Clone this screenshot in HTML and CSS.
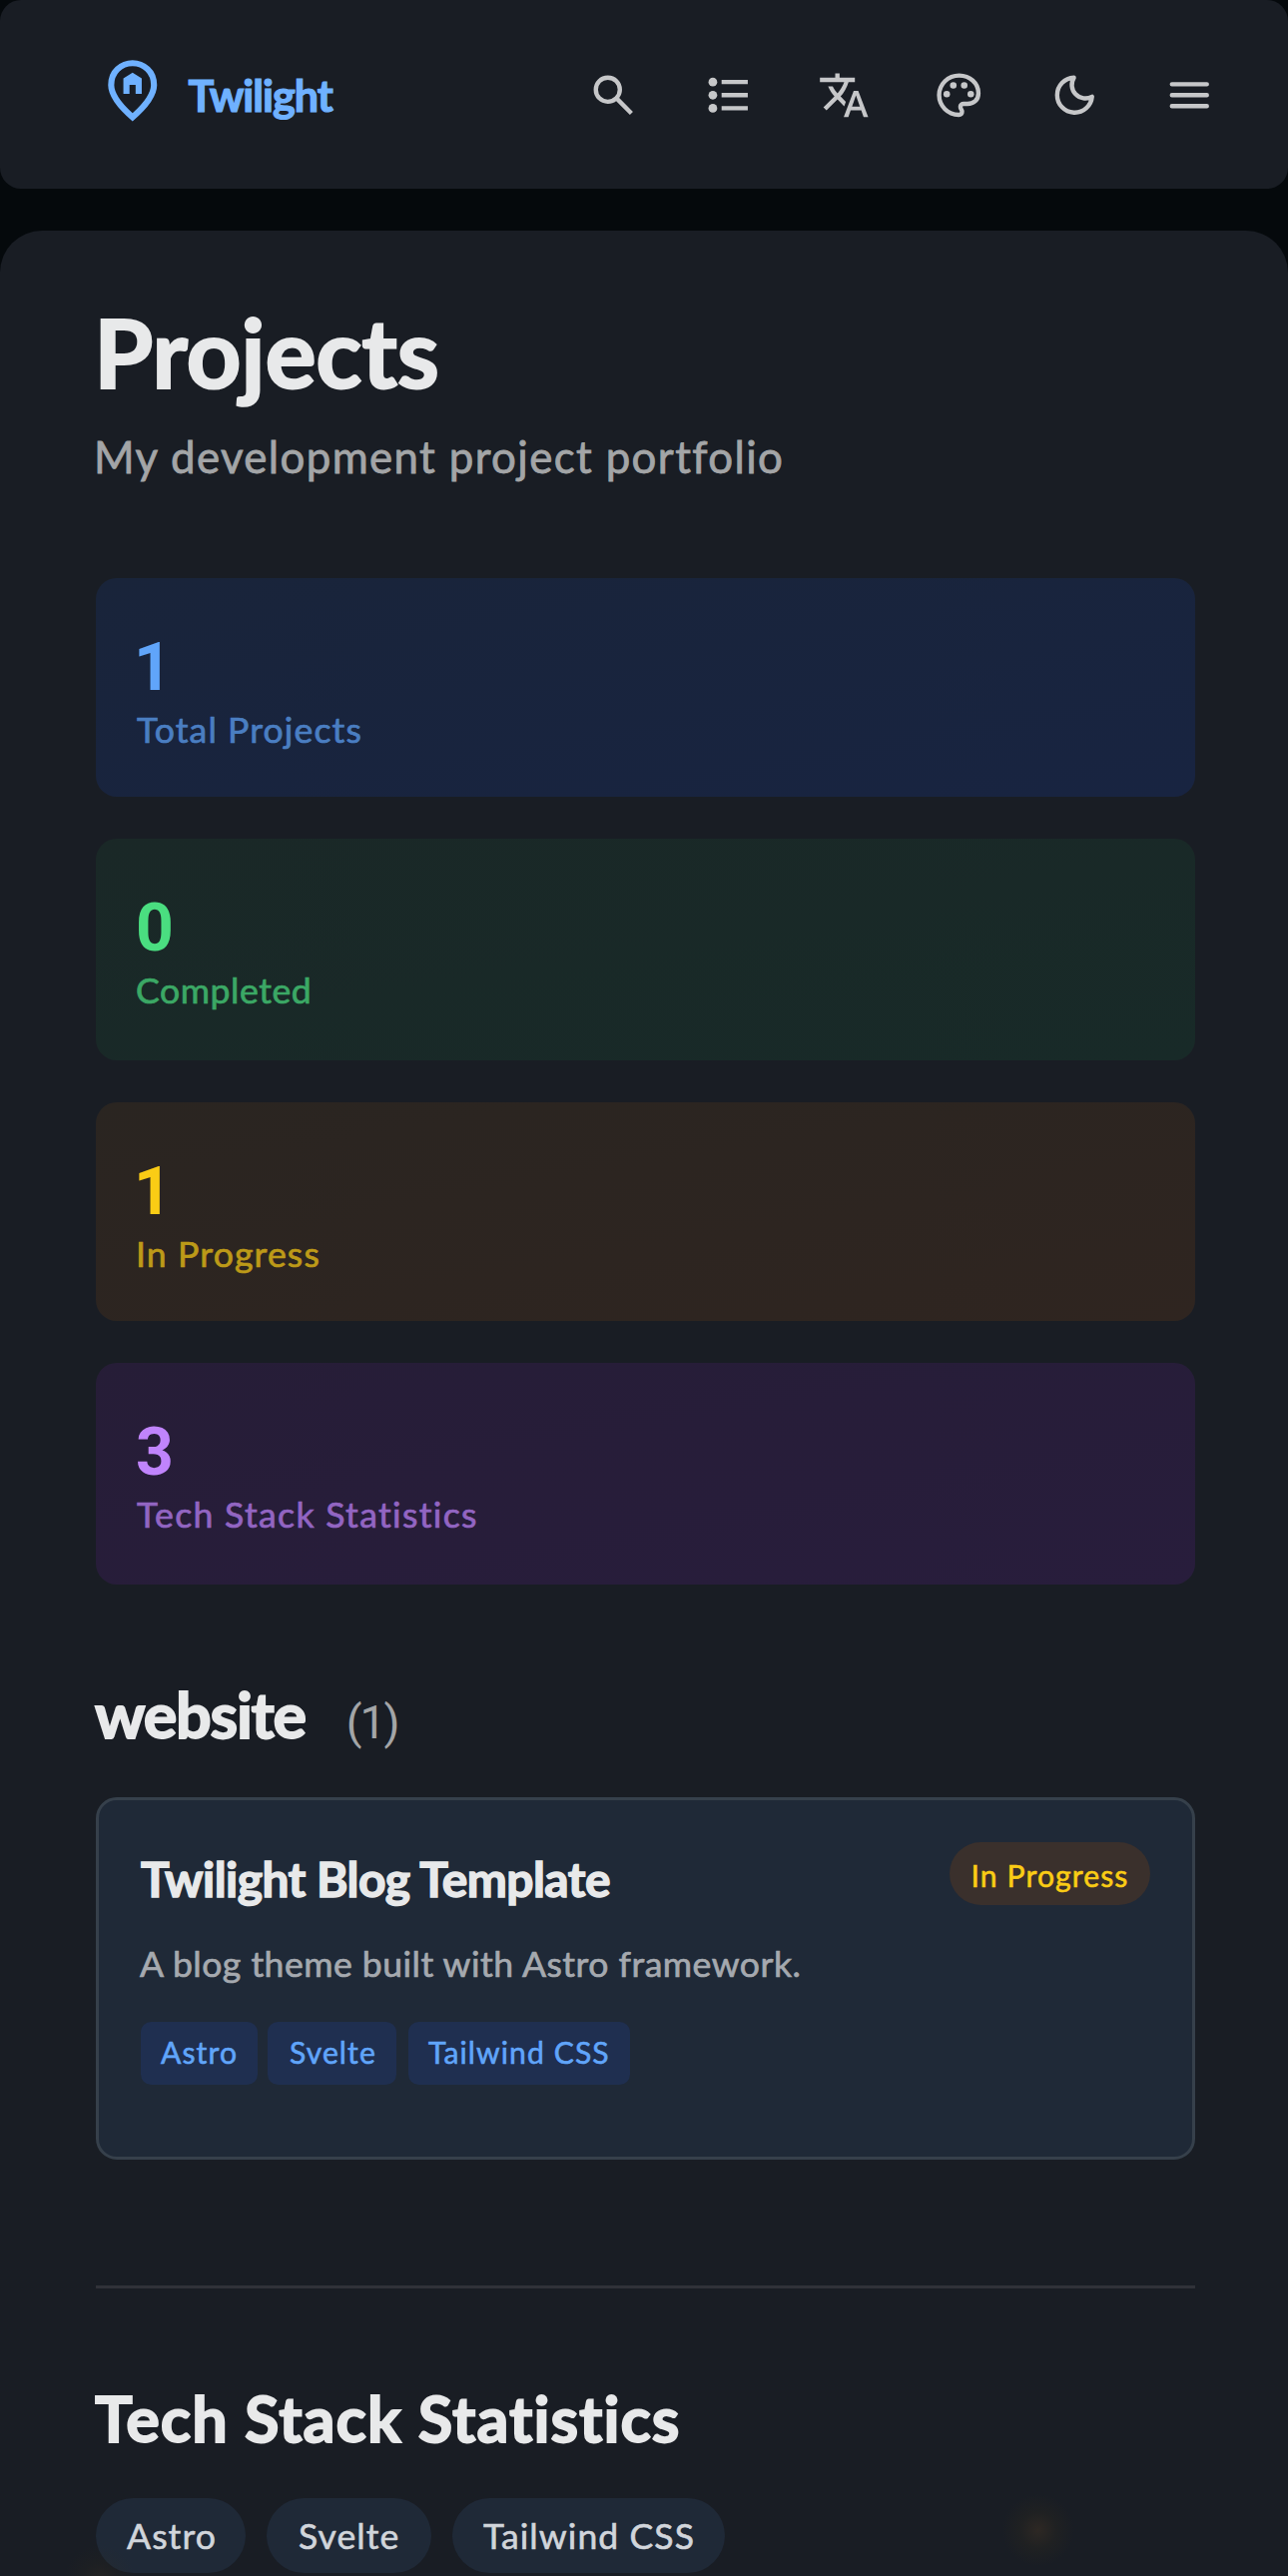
FILE: index.html
```html
<!DOCTYPE html>
<html lang="en">
<head>
<meta charset="utf-8">
<title>Projects - Twilight</title>
<link rel="stylesheet" href="styles.css">
</head>
<body>
<header class="navbar">
  <a class="brand">
    <svg class="brand-icon" viewBox="0 0 24 24"><path d="M9 13.1h2v-3h2v3h2V8l-3-1.9L9 8zM12 19.35q3.05-2.8 4.525-5.088T18 10.2q0-2.725-1.737-4.462T12 4 7.738 5.738 6 10.2q0 1.775 1.475 4.063T12 19.35M12 22q-4.025-3.425-6.012-6.362T4 10.2q0-3.75 2.413-5.975T12 2t5.588 2.225T20 10.2q0 2.5-1.987 5.438T12 22"/></svg>
    <span class="brand-name">Twilight</span>
  </a>
  <nav class="actions">
    <button class="action"><svg viewBox="0 0 24 24"><path d="m19.6 21-6.3-6.3q-.75.6-1.725.95T9.5 16q-2.725 0-4.612-1.888T3 9.5t1.888-4.612T9.5 3t4.613 1.888T16 9.5q0 1.1-.35 2.075T14.7 13.3l6.3 6.3zM9.5 14q1.875 0 3.188-1.312T14 9.5t-1.312-3.187T9.5 5 6.313 6.313 5 9.5t1.313 3.188T9.5 14"/></svg></button>
    <button class="action"><svg viewBox="0 0 24 24"><circle cx="5" cy="6" r="2"/><circle cx="5" cy="12" r="2"/><circle cx="5" cy="18" r="2"/><path d="M9 5h12v2H9zM9 11h12v2H9zM9 17h12v2H9z"/></svg></button>
    <button class="action"><svg viewBox="0 0 24 24"><path d="m11.9 22 4.55-12h2.1l4.55 12H21l-1.075-3.05h-4.85L14 22zM4 19l-1.4-1.4 5.05-5.05q-.875-.875-1.588-2T4.75 8h2.1q.5.975 1 1.7t1.2 1.45q.825-.825 1.713-2.313T12.1 6H1V4h7V2h2v2h7v2h-2.9q-.525 1.8-1.575 3.7t-2.075 2.9l2.4 2.45-.75 2.05-3.05-3.125zm11.7-1.8h3.6l-1.8-5.1z"/></svg></button>
    <button class="action"><svg viewBox="0 0 24 24"><path fill-rule="evenodd" d="M12 22q-2.05 0-3.875-.788t-3.187-2.15-2.15-3.187T2 12q0-2.075.813-3.9t2.2-3.175T8.25 2.788 12.2 2q2 0 3.775.688t3.113 1.9 2.125 2.875T22 11.05q0 2.875-1.75 4.413T16 17h-1.85q-.225 0-.312.125t-.088.275q0 .3.375.863t.375 1.287q0 1.25-.687 1.85T12 22m0-2q.225 0 .363-.125t.137-.325q0-.35-.375-.825T11.75 17.3q0-1.05.725-1.675T14.25 15H16q1.65 0 2.825-.962T20 11.05q0-3.025-2.312-5.037T12.2 4Q8.8 4 6.4 6.325T4 12q0 3.325 2.338 5.663T12 20"/><circle cx="6.5" cy="11.5" r="1.5"/><circle cx="9.5" cy="7.5" r="1.5"/><circle cx="14.5" cy="7.5" r="1.5"/><circle cx="17.5" cy="11.5" r="1.5"/></svg></button>
    <button class="action"><svg viewBox="0 0 24 24"><path class="line" d="M11.7 4A6.2 6.2 0 0 0 20 12.7 8 8 0 1 1 11.7 4Z"/></svg></button>
    <button class="action"><svg viewBox="0 0 24 24"><path class="line" d="M4 7h16M4 12h16M4 17h16"/></svg></button>
  </nav>
</header>

<main class="panel">
  <h1 class="title">Projects</h1>
  <p class="subtitle">My development project portfolio</p>

  <section class="stats">
    <div class="stat blue"><div class="value one">1</div><div class="label total">Total Projects</div></div>
    <div class="stat green"><div class="value">0</div><div class="label done">Completed</div></div>
    <div class="stat yellow"><div class="value one">1</div><div class="label progress">In Progress</div></div>
    <div class="stat purple"><div class="value">3</div><div class="label tech">Tech Stack Statistics</div></div>
  </section>

  <div class="group">
    <h2 class="group-name">website</h2>
    <span class="count">(1)</span>
  </div>
  <article class="project">
    <div class="project-head">
      <h3 class="project-name">Twilight Blog Template</h3>
      <span class="badge">In Progress</span>
    </div>
    <p class="desc">A blog theme built with Astro framework.</p>
    <div class="tags">
      <span class="tag astro">Astro</span>
      <span class="tag svelte">Svelte</span>
      <span class="tag tailwind">Tailwind CSS</span>
    </div>
  </article>

  <section class="stack">
    <h2 class="stack-title">Tech Stack Statistics</h2>
    <div class="pills">
      <span class="pill astro">Astro</span>
      <span class="pill svelte">Svelte</span>
      <span class="pill tailwind">Tailwind CSS</span>
    </div>
  </section>
  <i class="glow right"></i>
  <i class="glow left"></i>
</main>
</body>
</html>
```
FILE: styles.css
```css
* { box-sizing: border-box; margin: 0; }

html, body { height: 2580px; overflow: hidden; }

body {
  background: #05090c;
  color: #e8e9ea;
  font-family: Lato, sans-serif;
}

/* Navigation bar */
.navbar {
  display: flex;
  align-items: center;
  justify-content: space-between;
  height: 189px;
  padding: 1px 41px 0 96px;
  background: #191d24;
  border-radius: 21px;
}
.brand { display: flex; align-items: center; gap: 19px; color: #6fb1ff; }
.brand-icon { width: 73.5px; height: 73.5px; margin-top: -9px; fill: currentColor; }
.brand-name {
  font-size: 43.2px;
  line-height: 50px;
  font-weight: 700;
  letter-spacing: -1.03px;
  -webkit-text-stroke: 1.2px;
}
.actions { display: flex; }
.action {
  display: flex;
  align-items: center;
  justify-content: center;
  width: 115.5px;
  height: 115.5px;
  padding: 0;
  border: 0;
  background: none;
  color: #c6c7c9;
}
.action svg { width: 52.5px; height: 52.5px; fill: currentColor; }
.action .line {
  fill: none;
  stroke: currentColor;
  stroke-width: 2;
  stroke-linecap: round;
  stroke-linejoin: round;
}

/* Content panel */
.panel {
  position: relative;
  height: 2400px;
  margin-top: 42px;
  padding: 73px 93px 0 96px;
  background: #191d24;
  border-radius: 42px 42px 0 0;
}
.title {
  margin-left: -2px;
  font-size: 96px;
  line-height: 96px;
  letter-spacing: -.3px;
  -webkit-text-stroke: 2px;
}
.subtitle {
  margin: 27px 0 92px -2px;
  color: #a3a5a7;
  font-size: 43.8px;
  line-height: 60px;
  letter-spacing: 1.38px;
  -webkit-text-stroke: .8px;
}

/* Stat cards */
.stats { display: grid; gap: 42px; grid-template-rows: 219px 222px 219px 222px; }
.stat { padding: 57px 42px 0; border-radius: 21px; }
.value {
  margin-left: -2px;
  font-family: Roboto, sans-serif;
  font-size: 66px;
  line-height: 66px;
  font-weight: 700;
}
.value.one { margin-left: -4px; }
.label {
  margin: 7px 0 0 -1px;
  font-size: 35.6px;
  line-height: 44px;
  opacity: .7;
  -webkit-text-stroke: .7px;
}
.blue { background: linear-gradient(170deg, #19243a, #182441); color: #60a5fa; }
.green { background: linear-gradient(170deg, #1a2827, #182a28); color: #4ade80; }
.yellow { background: linear-gradient(170deg, #2a2521, #2f2520); color: #facc15; }
.purple { background: linear-gradient(170deg, #261d37, #281d3c); color: #c084fc; }
.total { letter-spacing: 1.11px; }
.done { margin-left: -2px; letter-spacing: .57px; }
.progress { margin-left: -2px; letter-spacing: 1.15px; }
.tech { letter-spacing: 1.34px; }

/* Project group */
.group { display: flex; align-items: baseline; gap: 41px; height: 70px; margin-top: 95px; }
.group-name {
  margin-left: -1px;
  font-size: 63px;
  line-height: 70px;
  letter-spacing: -1.3px;
  -webkit-text-stroke: 1.8px;
}
.count {
  color: #a3a5a7;
  font-family: Roboto, sans-serif;
  font-size: 46px;
  line-height: 60px;
  letter-spacing: -2px;
}
.project {
  height: 363px;
  margin-top: 48px;
  padding: 42px;
  border: 3px solid #36404b;
  border-radius: 21px;
  background: #1f2937;
}
.project-head { display: flex; align-items: flex-start; justify-content: space-between; height: 64px; }
.project-name {
  margin-top: 9px;
  font-size: 47.9px;
  line-height: 56px;
  letter-spacing: -.52px;
  -webkit-text-stroke: 1.4px;
}
.badge {
  width: 201px;
  height: 63px;
  border-radius: 32px;
  background: #3a302c;
  color: #facc15;
  font-size: 30.1px;
  line-height: 66px;
  letter-spacing: 1.11px;
  text-align: center;
  -webkit-text-stroke: .6px;
}
.desc {
  margin: 36px 0 0 -1px;
  color: #a5a9af;
  font-size: 35.6px;
  line-height: 44px;
  letter-spacing: .48px;
  -webkit-text-stroke: .7px;
}
.tags { display: flex; gap: 10px; margin-top: 36px; }
.tag {
  height: 63px;
  padding: 0 20px;
  border-radius: 10.5px;
  background: #1f2f50;
  color: #60a5fa;
  font-size: 30.1px;
  line-height: 61px;
  letter-spacing: 1.1px;
  white-space: nowrap;
  -webkit-text-stroke: .6px;
}
.tag.astro { width: 117px; }
.tag.svelte { width: 129px; padding-left: 22px; }
.tag.tailwind { width: 222px; margin-left: 2px; }

/* Tech stack */
.stack { margin-top: 126px; padding-top: 95px; border-top: 3px solid #303239; }
.stack-title {
  margin-left: -1px;
  font-size: 63px;
  line-height: 70px;
  letter-spacing: .99px;
  -webkit-text-stroke: 1.8px;
}
.pills { display: flex; gap: 21px; margin-top: 45px; }
.pill {
  height: 75px;
  padding: 0 31px;
  border-radius: 38px;
  background: #1f2937;
  color: #d1d5db;
  font-size: 35.6px;
  line-height: 75px;
  letter-spacing: 1.06px;
  white-space: nowrap;
  -webkit-text-stroke: .6px;
}
.pill.astro { width: 150px; }
.pill.svelte { width: 165px; padding-left: 32px; }
.pill.tailwind { width: 273px; }

/* Drifting firefly lights */
.glow {
  position: absolute;
  width: 72px;
  height: 72px;
  border-radius: 50%;
  background: radial-gradient(closest-side, rgba(110, 75, 35, .24), rgba(60, 50, 25, .18) 50%, transparent);
}
.glow.right { left: 1004px; top: 2267px; }
.glow.left { left: 64px; top: 2318px; opacity: .6; }
```
